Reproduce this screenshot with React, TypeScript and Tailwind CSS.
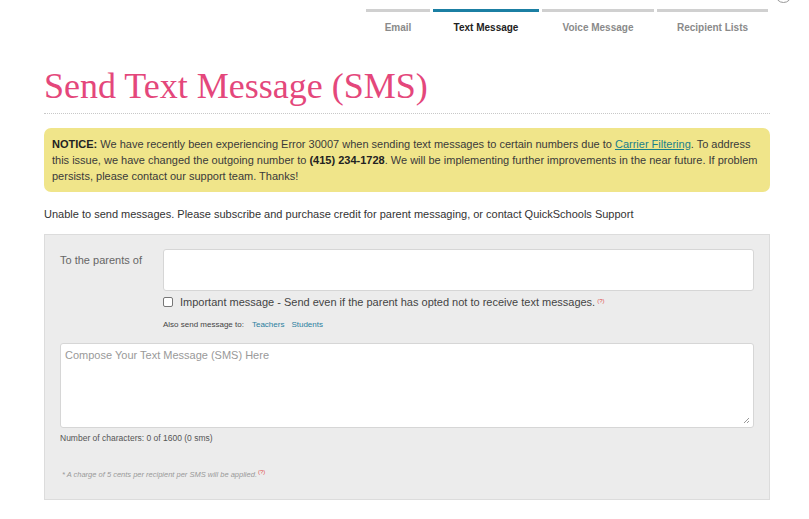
export default function App() {
  const tabs = [
    { label: "Email", w: "w-[64px]", active: false },
    { label: "Text Message", w: "w-[106px]", active: true },
    { label: "Voice Message", w: "w-[112px]", active: false },
    { label: "Recipient Lists", w: "w-[111px]", active: false },
  ];
  return (
    <div className="relative min-h-[519px] bg-white font-['Liberation_Sans',Arial,sans-serif] text-[#333]">
      <div className="absolute right-[17px] top-[-14px] h-[17px] w-[17px] rounded-full border border-[#999]"></div>
      <div className="ml-[44px] w-[726px]">
        <div className="flex justify-end gap-[3px] pr-[2px] pt-[9px]">
          {tabs.map((t) => (
            <div
              key={t.label}
              className={`${t.w} border-t-[3px] pt-[8px] text-center text-[10px] font-bold ${
                t.active ? "border-[#1b7fa3] text-[#222]" : "border-[#d0d0d0] text-[#8a8a8a]"
              }`}
            >
              {t.label}
            </div>
          ))}
        </div>

        <h1 className="mt-[31px] font-['Liberation_Serif',serif] text-[36px] font-light leading-[40px] text-[#e4477b]">
          Send Text Message (SMS)
        </h1>
        <div className="mt-[7px] border-b border-dotted border-[#c8c8c8]"></div>

        <div className="mt-[14px] rounded-[7px] bg-[#f0e58a] px-[8px] py-[8px] text-[11px] leading-[16px] text-[#3a3a3a]">
          <b className="text-[#222]">NOTICE:</b> We have recently been experiencing Error 30007 when sending text messages to
          certain numbers due to{" "}
          <span className="text-[#1a7f8a] underline">Carrier Filtering</span>. To address this issue, we have changed the
          outgoing number to <b className="text-[#222]">(415) 234-1728</b>. We will be implementing further improvements in
          the near future. If problem persists, please contact our support team. Thanks!
        </div>

        <p className="mt-[14px] text-[11px] leading-[16px] text-[#333]">
          Unable to send messages. Please subscribe and purchase credit for parent messaging, or contact QuickSchools Support
        </p>

        <div className="mt-[12px] h-[266px] border border-[#dcdcdc] bg-[#ececec] px-[15px] pt-[14px]">
          <div className="flex">
            <div className="w-[103px] pt-[3px] text-[11px] text-[#666]">To the parents of</div>
            <div className="flex-1">
              <div className="h-[42px] rounded-[3px] border border-[#d6d6d6] bg-white"></div>
              <div className="mt-[3px] flex items-center gap-[7px] text-[11px] leading-[16px] text-[#444]">
                <span className="h-[10px] w-[10px] rounded-[2px] border border-[#777] bg-white"></span>
                <span>
                  Important message - Send even if the parent has opted not to receive text messages.
                  <sup className="ml-[2px] text-[6px] text-[#e05050]">(?)</sup>
                </span>
              </div>
              <div className="mt-[9px] flex gap-[8px] text-[8px] leading-[12px] text-[#444]">
                <span>Also send message to:</span>
                <span className="text-[#2a7fa0]">Teachers</span>
                <span className="-ml-[1px] text-[#2a7fa0]">Students</span>
              </div>
            </div>
          </div>

          <div className="relative mt-[12px] h-[85px] rounded-[3px] border border-[#d6d6d6] bg-white px-[4px] pt-[3px] text-[11px] text-[#999]">
            Compose Your Text Message (SMS) Here
            <svg className="absolute bottom-[3px] right-[3px]" width="7" height="7" viewBox="0 0 7 7">
              <path d="M6 1L1 6M6 4L4 6" stroke="#999" strokeWidth="1" />
            </svg>
          </div>
          <div className="mt-[4px] text-[8.5px] leading-[12px] text-[#555]">Number of characters: 0 of 1600 (0 sms)</div>
          <div className="mt-[25px] pl-[2px] text-[7.5px] italic leading-[12px] text-[#999]">
            * A charge of 5 cents per recipient per SMS will be applied.
            <sup className="ml-[1px] text-[6px] not-italic text-[#e05050]">(?)</sup>
          </div>
        </div>
      </div>
    </div>
  );
}
